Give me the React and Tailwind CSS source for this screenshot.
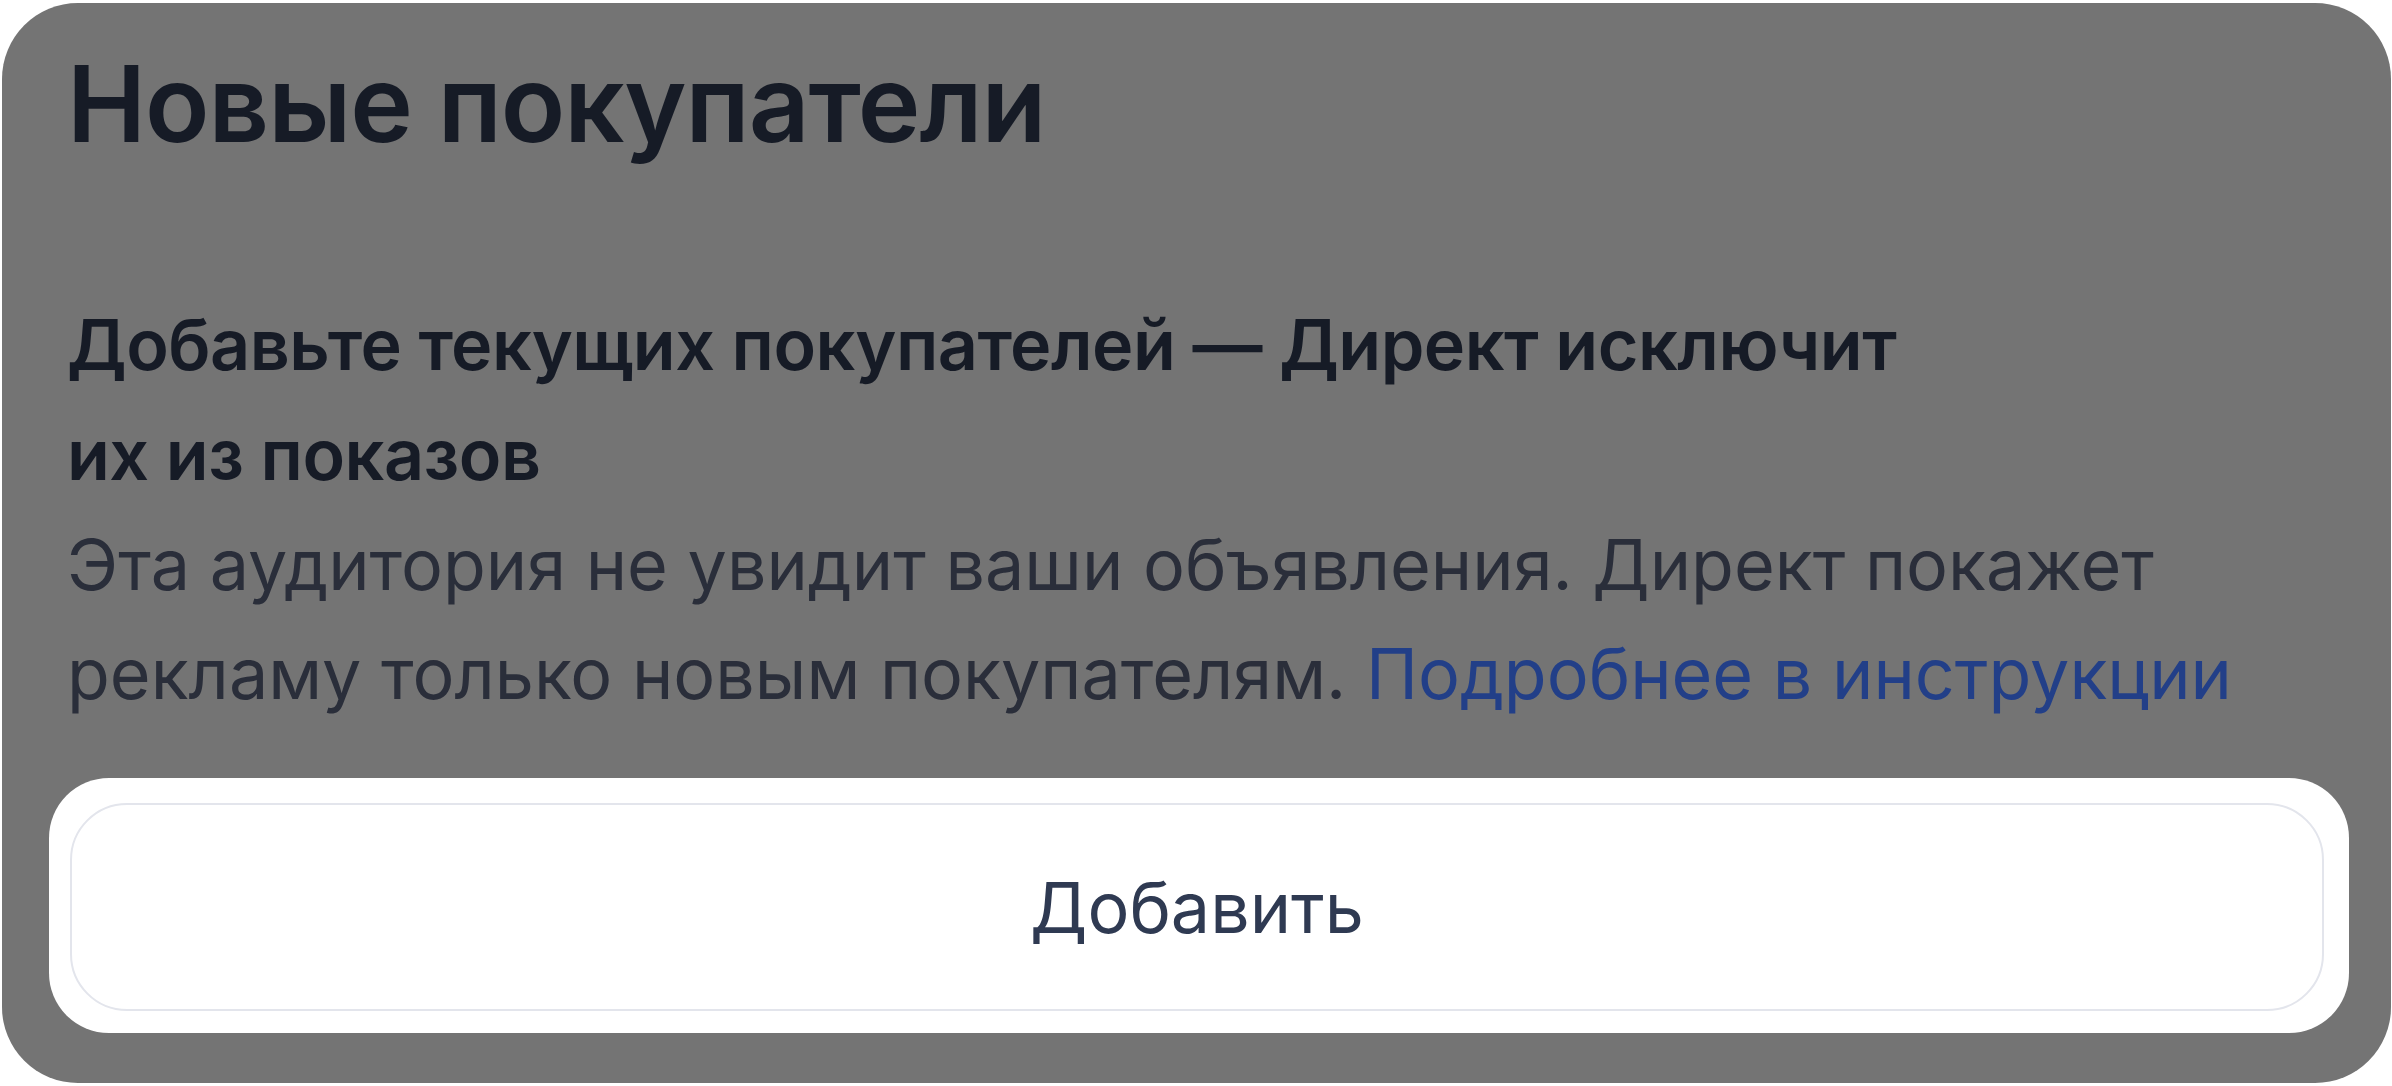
export default function App() {
  return (
    <div
      className="w-[2392px] h-[1086px] bg-white pl-[2px] pr-[1px] pt-[3px] pb-[3px]"
      style={{ fontFamily: "Inter, 'Noto Sans', sans-serif" }}
    >
      <div className="h-full bg-[#747474] rounded-[76px] flex flex-col">
        <div className="pl-[65px] pt-[36px]">
          <h1 className="text-[106px] leading-[130px] font-semibold text-[#161b26] tracking-[-1px]">
            Новые покупатели
          </h1>
          <p className="mt-[121px] text-[70px] leading-[110px] font-semibold text-[#161b26] tracking-[-0.5px] w-[1900px]">
            Добавьте текущих покупателей — Директ исключит
            <br />
            их из показов
          </p>
          <p className="text-[70px] leading-[109px] text-[#2a2e3a]">
            Эта аудитория не увидит ваши объявления. Директ покажет
            <br />
            рекламу только новым покупателям.{" "}
            <a className="text-[#223f88]">Подробнее в инструкции</a>
          </p>
        </div>
        <div className="ml-[47px] mr-[42px] mt-auto mb-[50px] h-[255px] bg-white rounded-[60px] pl-[21px] pr-[25px] pt-[25px] pb-[22px]">
          <button className="w-full h-full rounded-[57px] border-2 border-[#e3e5ec] bg-white text-[70px] text-[#2f3a52] flex items-center justify-center">
            Добавить
          </button>
        </div>
      </div>
    </div>
  );
}
